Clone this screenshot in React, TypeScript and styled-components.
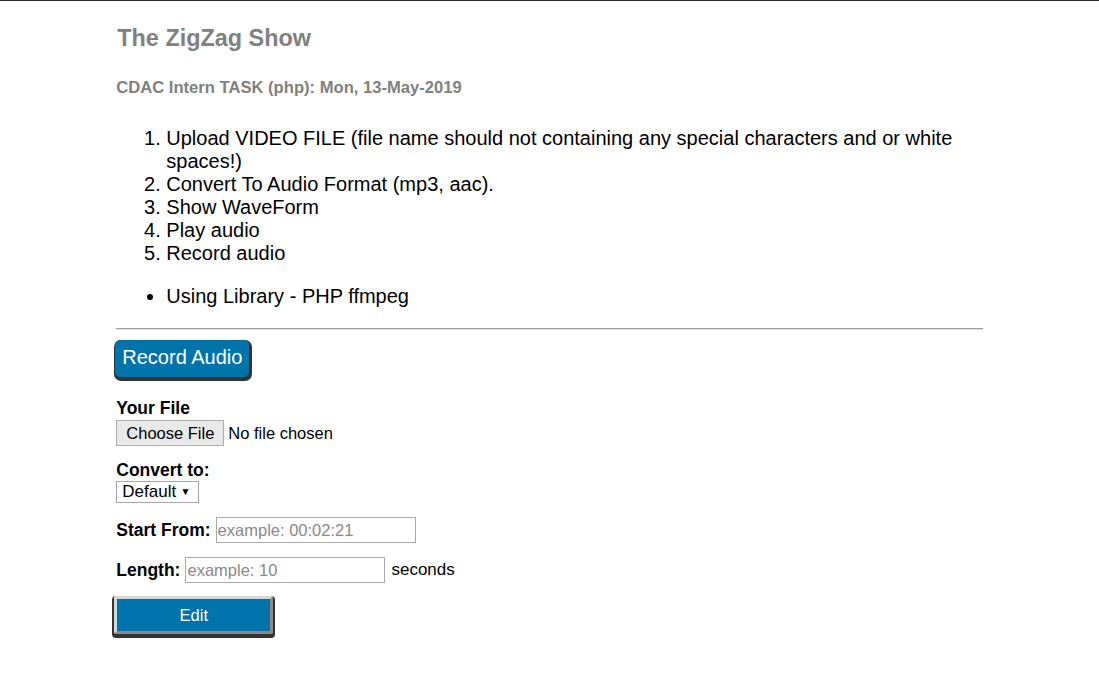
import React from "react";
import styled, { createGlobalStyle } from "styled-components";

const GlobalStyle = createGlobalStyle`
  html {
    border-top: 1px solid #2b2b2b;
    background: #ffffff;
  }
  body {
    margin: 0 8px;
    font-family: "Liberation Sans", Arial, sans-serif;
    color: #000;
    background: #ffffff;
  }
`;

const Container = styled.main`
  width: 80%;
  margin: 0 auto;
  padding-bottom: 40px;
`;

const Title = styled.h1`
  margin: 25px 0 0 1px;
  font-size: 23.4px;
  line-height: 25px;
  font-weight: 700;
  color: #808080;
`;

const Subtitle = styled.h4`
  margin: 28px 0 0;
  font-size: 16.6px;
  line-height: 18px;
  font-weight: 700;
  color: #808080;
`;

const Steps = styled.ol`
  margin: 30px 0 20px;
  padding-left: 50px;
  font-size: 20px;
  line-height: 23px;
`;

const Notes = styled.ul`
  margin: 0 0 20px;
  padding-left: 50px;
  font-size: 20px;
  line-height: 23px;
`;

const Divider = styled.hr`
  margin: 0 0 10px;
  height: 0;
  border: 0;
  border-top: 1px solid #9a9a9a;
  border-bottom: 1px solid #e2e2e2;
`;

const RecordButton = styled.button`
  display: block;
  box-sizing: border-box;
  margin-left: -1px;
  height: 37px;
  padding: 0 7px 2px;
  border: none;
  border-radius: 5px;
  background: #0074aa;
  color: #ffffff;
  font-family: "Liberation Sans", Arial, sans-serif;
  font-size: 20px;
  line-height: 35px;
  box-shadow: 1px 2px 0 2px #333333;
  cursor: pointer;
`;

const Form = styled.form`
  display: flex;
  flex-direction: column;
  align-items: flex-start;
`;

const FieldLabel = styled.label<{ $top: number }>`
  display: block;
  margin-top: ${(p) => p.$top}px;
  font-size: 17.5px;
  line-height: 18px;
  font-weight: 700;
`;

const FileRow = styled.div`
  display: flex;
  align-items: center;
  gap: 4px;
  margin-top: 3px;
  height: 26px;
  font-size: 16.5px;
`;

const FileButton = styled.span`
  box-sizing: border-box;
  display: inline-flex;
  align-items: center;
  height: 26px;
  padding: 0 9px;
  background: #e9e9e9;
  border: 1px solid #adadad;
  font-size: 16.5px;
`;

const SelectWrap = styled.div`
  position: relative;
  margin-top: 2px;
  width: 83px;
  height: 22px;

  &::after {
    content: "▼";
    position: absolute;
    right: 9px;
    top: 5px;
    font-size: 10px;
    line-height: 12px;
    color: #000;
    pointer-events: none;
  }
`;

const Select = styled.select`
  appearance: none;
  box-sizing: border-box;
  width: 100%;
  height: 22px;
  margin: 0;
  padding: 0 0 0 5px;
  border: 1px solid #a6a6a6;
  border-radius: 0;
  background: #ffffff;
  color: #000;
  font-family: "Liberation Sans", Arial, sans-serif;
  font-size: 17px;
  line-height: 20px;
`;

const InlineRow = styled.div<{ $top: number }>`
  display: flex;
  align-items: center;
  gap: 5px;
  margin-top: ${(p) => p.$top}px;
  height: 26px;
`;

const InlineLabel = styled.label`
  font-size: 17.5px;
  font-weight: 700;
`;

const TextInput = styled.input`
  box-sizing: border-box;
  width: 200px;
  height: 26px;
  margin: 0;
  padding: 0 1px;
  border: 1px solid #a9a9a9;
  font-family: "Liberation Sans", Arial, sans-serif;
  font-size: 16.5px;
  color: #000;

  &::placeholder {
    color: #8a8a8a;
  }
`;

const Unit = styled.span`
  margin-left: 1px;
  font-size: 17px;
`;

const EditButton = styled.button`
  box-sizing: border-box;
  margin: 13px 0 0 -2px;
  width: 159px;
  height: 38px;
  padding: 0;
  border: 3px solid;
  border-color: #d6d6d6 #8a8a8a #8a8a8a #d6d6d6;
  border-radius: 2px;
  background: #0074aa;
  color: #ffffff;
  font-family: "Liberation Sans", Arial, sans-serif;
  font-size: 16.5px;
  box-shadow: 0 2px 0 2px #333333;
  cursor: pointer;
`;

export default function App() {
  return (
    <>
      <GlobalStyle />
      <Container>
        <Title>The ZigZag Show</Title>
        <Subtitle>CDAC Intern TASK (php): Mon, 13-May-2019</Subtitle>
        <Steps>
          <li>
            Upload VIDEO FILE (file name should not containing any special
            characters and or white spaces!)
          </li>
          <li>Convert To Audio Format (mp3, aac).</li>
          <li>Show WaveForm</li>
          <li>Play audio</li>
          <li>Record audio</li>
        </Steps>
        <Notes>
          <li>Using Library - PHP ffmpeg</li>
        </Notes>
        <Divider />
        <RecordButton type="button">Record Audio</RecordButton>
        <Form onSubmit={(e) => e.preventDefault()}>
          <FieldLabel $top={22}>Your File</FieldLabel>
          <FileRow>
            <FileButton>Choose File</FileButton>
            <span>No file chosen</span>
          </FileRow>
          <FieldLabel $top={15}>Convert to:</FieldLabel>
          <SelectWrap>
            <Select defaultValue="default">
              <option value="default">Default</option>
              <option value="mp3">mp3</option>
              <option value="aac">aac</option>
            </Select>
          </SelectWrap>
          <InlineRow $top={14}>
            <InlineLabel>Start From:</InlineLabel>
            <TextInput placeholder="example: 00:02:21" />
          </InlineRow>
          <InlineRow $top={14}>
            <InlineLabel>Length:</InlineLabel>
            <TextInput placeholder="example: 10" />
            <Unit>seconds</Unit>
          </InlineRow>
          <EditButton type="submit">Edit</EditButton>
        </Form>
      </Container>
    </>
  );
}
